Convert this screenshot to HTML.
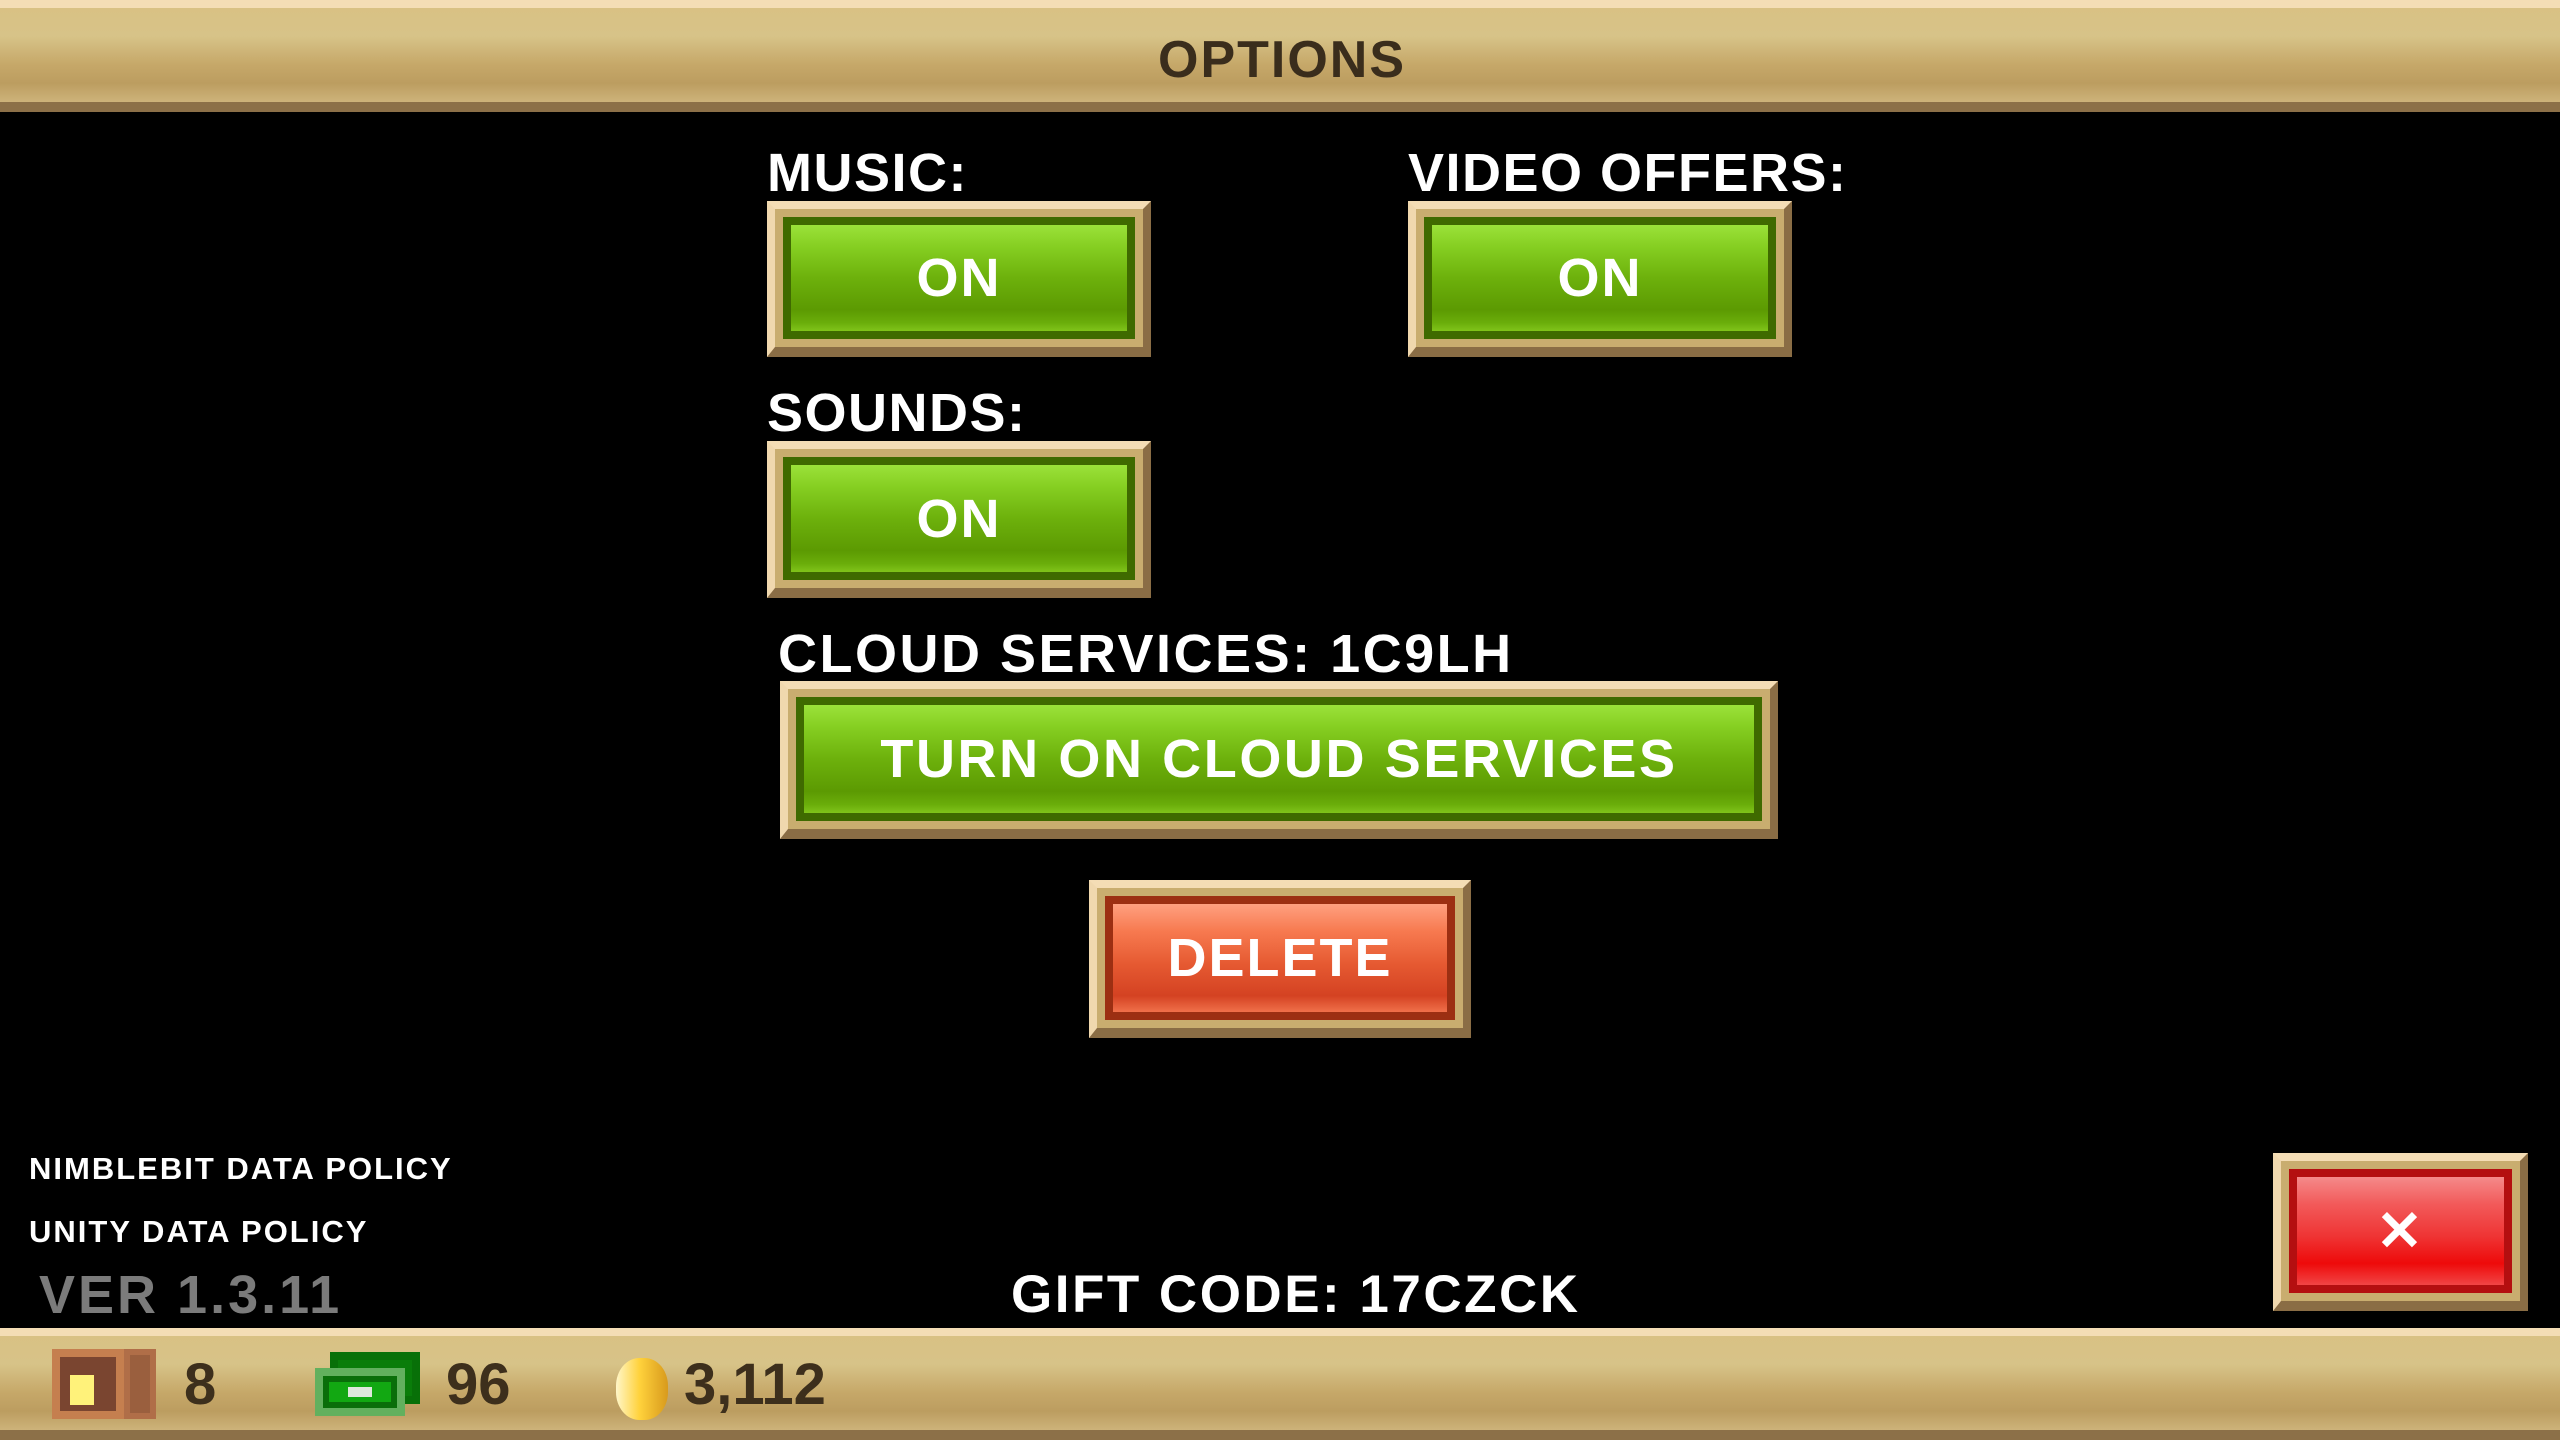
<!DOCTYPE html>
<html><head><meta charset="utf-8"><style>
*{margin:0;padding:0;box-sizing:border-box}
body{width:2560px;height:1440px;background:#000;position:relative;overflow:hidden;font-family:"Liberation Sans",sans-serif;font-weight:bold;color:#fff}
.t{position:absolute;font-size:54px;line-height:1;white-space:nowrap;letter-spacing:1.5px}
.bar{position:absolute;left:0;width:2560px;background:linear-gradient(#d9c184 0%,#d7c388 30%,#c6a869 60%,#bc9d60 80%,#cdb37a 100%)}
.btn{position:absolute;background:#c9ad6f;border-top:8px solid #f4ddb5;border-left:8px solid #f0d8ae;border-right:8px solid #8a6d45;border-bottom:10px solid #8a6d45;padding:8px}
.in{width:100%;height:100%;border:8px solid #3f6a00;display:flex;align-items:center;justify-content:center;font-size:54px;letter-spacing:2px;background:linear-gradient(#9be23a 0%,#86cf22 20%,#6db10c 50%,#5c9a02 80%,#6aad0a 92%,#80c41a 100%)}
.red .in{border-color:#9c2f12;background:linear-gradient(#ffa080 0%,#f77a50 25%,#e65a32 55%,#d44222 85%,#f0704a 100%)}
.x .in{border-color:#b40f10;background:linear-gradient(#f58a8a 0%,#f25a5a 25%,#ef3434 55%,#ee0a0a 80%,#f14545 100%)}
.n{color:#3d2f1c;font-size:58px;letter-spacing:0}
</style></head><body>
<div class="bar" style="top:0;height:112px;border-top:8px solid #f4ddb5;border-bottom:10px solid #8c7048"></div>
<div class="t" style="left:1158px;top:34px;color:#3a2d1c;font-size:52px;letter-spacing:2px">OPTIONS</div>

<div class="t" style="left:767px;top:146px">MUSIC:</div>
<div class="btn" style="left:767px;top:201px;width:384px;height:156px"><div class="in">ON</div></div>
<div class="t" style="left:1408px;top:146px">VIDEO OFFERS:</div>
<div class="btn" style="left:1408px;top:201px;width:384px;height:156px"><div class="in">ON</div></div>
<div class="t" style="left:767px;top:386px">SOUNDS:</div>
<div class="btn" style="left:767px;top:441px;width:384px;height:157px"><div class="in">ON</div></div>
<div class="t" style="left:778px;top:627px;letter-spacing:2.5px">CLOUD SERVICES: 1C9LH</div>
<div class="btn" style="left:780px;top:681px;width:998px;height:158px"><div class="in" style="letter-spacing:2.6px">TURN ON CLOUD SERVICES</div></div>
<div class="btn red" style="left:1089px;top:880px;width:382px;height:158px"><div class="in">DELETE</div></div>
<div class="btn x" style="left:2273px;top:1153px;width:255px;height:158px"><div class="in" style="font-size:56px">✕</div></div>

<div class="t" style="left:29px;top:1153px;font-size:31px;letter-spacing:2px">NIMBLEBIT DATA POLICY</div>
<div class="t" style="left:29px;top:1216px;font-size:31px;letter-spacing:2px">UNITY DATA POLICY</div>
<div class="t" style="left:39px;top:1268px;color:#7b7b7b;font-size:54px;letter-spacing:3px">VER 1.3.11</div>
<div class="t" style="left:1011px;top:1268px;font-size:53px;letter-spacing:2.5px">GIFT CODE: 17CZCK</div>

<div class="bar" style="top:1328px;height:112px;border-top:8px solid #f4ddb5;border-bottom:10px solid #8c7048"></div>
<div style="position:absolute;left:52px;top:1349px;width:72px;height:70px;background:#c57f4f;padding:8px"><div style="width:100%;height:100%;background:#7a4530;padding:12px 10px"><div style="width:24px;height:30px;background:#fff27a;margin-top:6px"></div></div></div>
<div style="position:absolute;left:124px;top:1349px;width:32px;height:70px;background:#9a5f3e;border:6px solid #b06e48"></div>
<div class="t n" style="left:184px;top:1356px">8</div>
<div style="position:absolute;left:330px;top:1352px;width:90px;height:52px;background:#0a7d0a;border:8px solid #087008"></div>
<div style="position:absolute;left:315px;top:1368px;width:90px;height:48px;background:#62b05e;padding:8px"><div style="width:100%;height:100%;background:#12a812;border:6px solid #0a6e0a;display:flex;justify-content:center;align-items:center"><div style="width:24px;height:10px;background:#dfe8dc"></div></div></div>
<div class="t n" style="left:446px;top:1356px">96</div>
<div style="position:absolute;left:616px;top:1358px;width:52px;height:62px;border-radius:45%;background:linear-gradient(90deg,#fff6c8,#ffd23c 45%,#d89a1c)"></div>
<div class="t n" style="left:684px;top:1356px">3,112</div>
</body></html>
